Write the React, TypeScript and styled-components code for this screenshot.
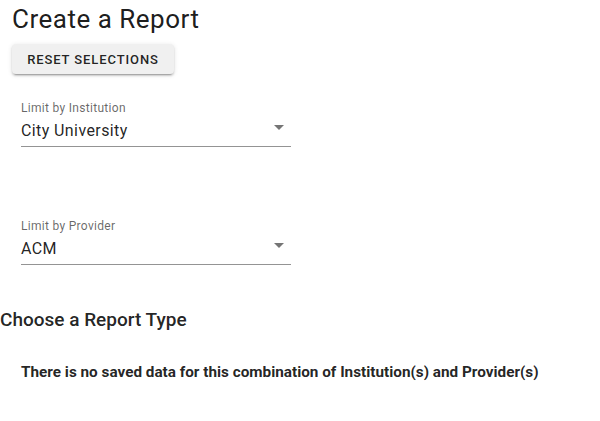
import React, { ReactElement } from 'react';
import styled, { createGlobalStyle } from 'styled-components';

const GlobalStyle = createGlobalStyle`
  body {
    margin: 0;
    background: #ffffff;
    font-family: Roboto, 'Liberation Sans', Arial, sans-serif;
    color: rgba(0, 0, 0, 0.87);
  }
`;

interface SelectFieldProps {
  label: string;
  value: string;
}

const SelectField = ({ label, value }: SelectFieldProps): ReactElement => (
  <FieldBlock>
    <FieldLabel>{label}</FieldLabel>
    <FieldInput>
      <FieldValue>{value}</FieldValue>
      <Arrow viewBox="0 0 24 24">
        <path d="M7 10l5 5 5-5z" />
      </Arrow>
    </FieldInput>
  </FieldBlock>
);

const App = (): ReactElement => (
  <Page>
    <GlobalStyle />
    <Title>Create a Report</Title>
    <ResetButton type="button">Reset Selections</ResetButton>
    <Fields>
      <SelectField label="Limit by Institution" value="City University" />
      <SelectField label="Limit by Provider" value="ACM" />
    </Fields>
    <SectionTitle>Choose a Report Type</SectionTitle>
    <EmptyNotice>
      There is no saved data for this combination of Institution(s) and
      Provider(s)
    </EmptyNotice>
  </Page>
);

const Page = styled.div`
  display: flex;
  flex-direction: column;
  align-items: flex-start;
  width: 600px;
  height: 421px;
  overflow: hidden;
`;

const Title = styled.h1`
  margin: 2px 0 0 12px;
  font-size: 26px;
  font-weight: 400;
  line-height: 34px;
  letter-spacing: 0.5px;
  color: rgba(0, 0, 0, 0.9);
`;

const ResetButton = styled.button`
  margin: 8px 0 0 12px;
  height: 30px;
  width: 162px;
  padding: 0 14px;
  border: none;
  border-radius: 4px;
  background: #f0f0f0;
  box-shadow: 0 3px 1px -2px rgba(0, 0, 0, 0.2), 0 2px 2px 0 rgba(0, 0, 0, 0.14),
    0 1px 5px 0 rgba(0, 0, 0, 0.12);
  font-family: Roboto, 'Liberation Sans', Arial, sans-serif;
  font-size: 13px;
  font-weight: 500;
  letter-spacing: 0.9px;
  text-transform: uppercase;
  color: rgba(0, 0, 0, 0.87);
`;

const Fields = styled.div`
  display: flex;
  flex-direction: column;
  gap: 72px;
  margin: 27px 0 0 21px;
`;

const FieldBlock = styled.div`
  display: flex;
  flex-direction: column;
  width: 270px;
`;

const FieldLabel = styled.label`
  font-size: 12px;
  line-height: 14px;
  letter-spacing: 0.3px;
  color: rgba(0, 0, 0, 0.6);
`;

const FieldInput = styled.div`
  display: flex;
  align-items: flex-end;
  justify-content: space-between;
  height: 32px;
  box-sizing: border-box;
  padding-bottom: 6px;
  border-bottom: 1px solid rgba(0, 0, 0, 0.42);
`;

const FieldValue = styled.span`
  font-size: 16px;
  line-height: 19px;
  letter-spacing: 0.4px;
`;

const Arrow = styled.svg`
  align-self: center;
  width: 24px;
  height: 24px;
  margin-top: -2px;
  fill: rgba(0, 0, 0, 0.54);
`;

const SectionTitle = styled.h2`
  margin: 43px 0 0 0;
  font-size: 19px;
  font-weight: 500;
  line-height: 24px;
`;

const EmptyNotice = styled.p`
  margin: 30px 0 0 21px;
  font-size: 15.3px;
  font-weight: 700;
  line-height: 20px;
  color: rgba(0, 0, 0, 0.87);
`;

export default App;
